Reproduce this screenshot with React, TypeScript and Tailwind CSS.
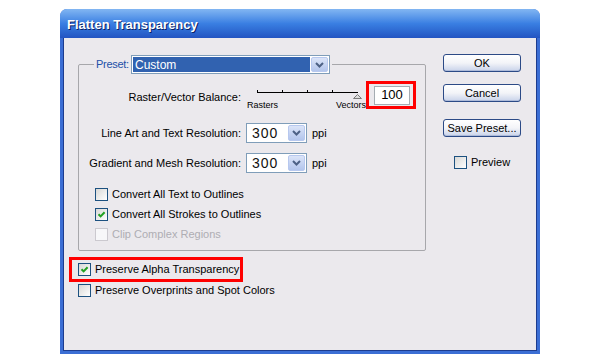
import React from 'react';

const font = "font-['Liberation_Sans',Arial,sans-serif]";

// XP style checkbox
const CheckBox = ({ checked = false, disabled = false }: { checked?: boolean; disabled?: boolean }) => (
  <span
    className={`w-[13px] h-[13px] border flex items-center justify-center shrink-0 ${
      disabled
        ? 'border-[#cbc9cf] bg-[#f7f7f9]'
        : 'border-[#1c5180] bg-gradient-to-br from-[#d8d8d6] to-white'
    }`}
  >
    {checked && (
      <svg width="9" height="9" viewBox="0 0 9 9">
        <path d="M1.5 4.2 L3.6 6.4 L7.6 2.2" stroke="#21a121" strokeWidth="2" fill="none" />
      </svg>
    )}
  </span>
);

const ArrowButton = () => (
  <span className="w-[17px] border border-[#b7c8ef] rounded-[2px] bg-gradient-to-b from-[#dbe4f8] to-[#b3c5ec] flex items-center justify-center shrink-0">
    <svg width="9" height="6" viewBox="0 0 9 6">
      <path d="M1 1 L4.5 4.5 L8 1" stroke="#4d6185" strokeWidth="2" fill="none" />
    </svg>
  </span>
);

const Combo = ({ value }: { value: string }) => (
  <div className="w-[61px] h-[20px] border border-[#7f9db9] bg-white flex items-stretch p-[1px]">
    <span className="flex-1 pl-[4px] flex items-center text-[14px] tracking-[1px] text-[#111]">{value}</span>
    <ArrowButton />
  </div>
);

const CheckRow = ({ label, checked, disabled }: { label: string; checked?: boolean; disabled?: boolean }) => (
  <div className="h-[20px] flex items-center gap-[4px] pl-[16px]">
    <CheckBox checked={checked} disabled={disabled} />
    <span className={disabled ? 'text-[#aeadb3]' : 'text-black'}>{label}</span>
  </div>
);

const XpButton = ({ children, className = '' }: { children: React.ReactNode; className?: string }) => (
  <button
    className={`w-[78px] h-[18px] rounded-[3px] border border-[#2c4a86] bg-gradient-to-b from-white via-[#f3f4f8] to-[#c9d3ea] shadow-[inset_0_-1px_0_#aebbd9] text-[11px] text-black leading-none flex items-center justify-center ${className}`}
  >
    {children}
  </button>
);

export default function App() {
  return (
    <div className={`w-[600px] h-[362px] bg-white overflow-hidden pt-[9px] ${font} text-[11px]`}>
      <div className="ml-[60px] w-[480px] h-[345px] flex flex-col rounded-t-[7px] overflow-hidden bg-[#3b6ed4]">
        {/* title bar */}
        <div className="h-[29px] shrink-0 bg-gradient-to-b from-[#82b6f2] via-[#3a7fe2] to-[#2354c2] flex items-center pl-[7px] pt-[2px]">
          <span className="text-white font-bold text-[13px] [text-shadow:1px_1px_0_#0c2266]">
            Flatten Transparency
          </span>
        </div>

        {/* client area */}
        <div className="flex-1 mx-[3px] mb-[3px] border border-t-0 border-[#1d3c8e] bg-[#ebe9ed] flex">
          <div className="w-[362px] shrink-0 pt-[17px] pl-[5px] flex flex-col">
            <fieldset className="ml-[9px] w-[348px] border border-[#a7a7ab] rounded-[2px] pb-[6px]">
              <legend className="ml-[15px] px-[2px] flex items-center h-[19px]">
                <span className="w-[35px] text-[#2250a8] tracking-[-0.3px]">Preset:</span>
                <div className="w-[199px] h-[19px] border border-[#7f9db9] bg-white flex items-stretch p-[1px]">
                  <span className="flex-1 bg-[#3162b0] text-white flex items-center pl-[2px] mr-[1px] text-[12px]">
                    Custom
                  </span>
                  <ArrowButton />
                </div>
              </legend>

              {/* raster / vector balance */}
              <div className="mt-[7px] h-[28px] flex">
                <div className="w-[162px] text-right pt-[8px] text-black">Raster/Vector Balance:</div>
                <div className="ml-[6px] w-[119px] flex flex-col pt-[8px]">
                  <svg width="119" height="11" viewBox="0 0 119 11" className="overflow-visible">
                    <line x1="10" y1="3.5" x2="111" y2="3.5" stroke="#000" strokeWidth="1" />
                    <line x1="10.5" y1="1" x2="10.5" y2="4" stroke="#000" />
                    <line x1="35.5" y1="1" x2="35.5" y2="4" stroke="#000" />
                    <line x1="60.5" y1="1" x2="60.5" y2="4" stroke="#000" />
                    <line x1="85.5" y1="1" x2="85.5" y2="4" stroke="#000" />
                    <path d="M106.5 9.5 L110.5 5.5 L114.5 9.5 Z" fill="#dcdcdc" stroke="#7a7a7a" strokeWidth="1" />
                  </svg>
                  <div className="flex justify-between text-[9px] leading-[10px] text-black whitespace-nowrap">
                    <span>Rasters</span>
                    <span>Vectors</span>
                  </div>
                </div>
                <div className="w-[50px] h-[28px] border-[3px] border-[#ff0000] flex items-center pl-[5px]">
                  <div className="w-[36px] h-[19px] border border-[#a5acb2] bg-white flex items-center justify-center text-[13px] text-black">
                    100
                  </div>
                </div>
              </div>

              {/* resolutions */}
              <div className="mt-[14px] h-[20px] flex items-center">
                <div className="w-[162px] text-right text-black">Line Art and Text Resolution:</div>
                <div className="ml-[5px]">
                  <Combo value="300" />
                </div>
                <span className="ml-[5px] text-black">ppi</span>
              </div>
              <div className="mt-[10px] h-[20px] flex items-center">
                <div className="w-[162px] text-right text-black">Gradient and Mesh Resolution:</div>
                <div className="ml-[5px]">
                  <Combo value="300" />
                </div>
                <span className="ml-[5px] text-black">ppi</span>
              </div>

              <div className="mt-[11px] flex flex-col">
                <CheckRow label="Convert All Text to Outlines" />
                <CheckRow label="Convert All Strokes to Outlines" checked />
                <CheckRow label="Clip Complex Regions" disabled />
              </div>
            </fieldset>

            <div className="mt-[6px] w-[174px] h-[25px] border-[3px] border-[#ff0000] flex items-center gap-[4px] pl-[6px]">
              <CheckBox checked />
              <span className="text-black">Preserve Alpha Transparency</span>
            </div>
            <div className="mt-[2px] h-[13px] flex items-center gap-[4px] pl-[9px]">
              <CheckBox />
              <span className="text-black">Preserve Overprints and Spot Colors</span>
            </div>
          </div>

          {/* buttons */}
          <div className="ml-[17px] pt-[16px] flex flex-col">
            <XpButton>OK</XpButton>
            <XpButton className="mt-[12px]">Cancel</XpButton>
            <XpButton className="mt-[17px]">Save Preset...</XpButton>
            <div className="mt-[17px] ml-[11px] flex items-center gap-[4px]">
              <CheckBox />
              <span className="text-black">Preview</span>
            </div>
          </div>
        </div>
      </div>
    </div>
  );
}
